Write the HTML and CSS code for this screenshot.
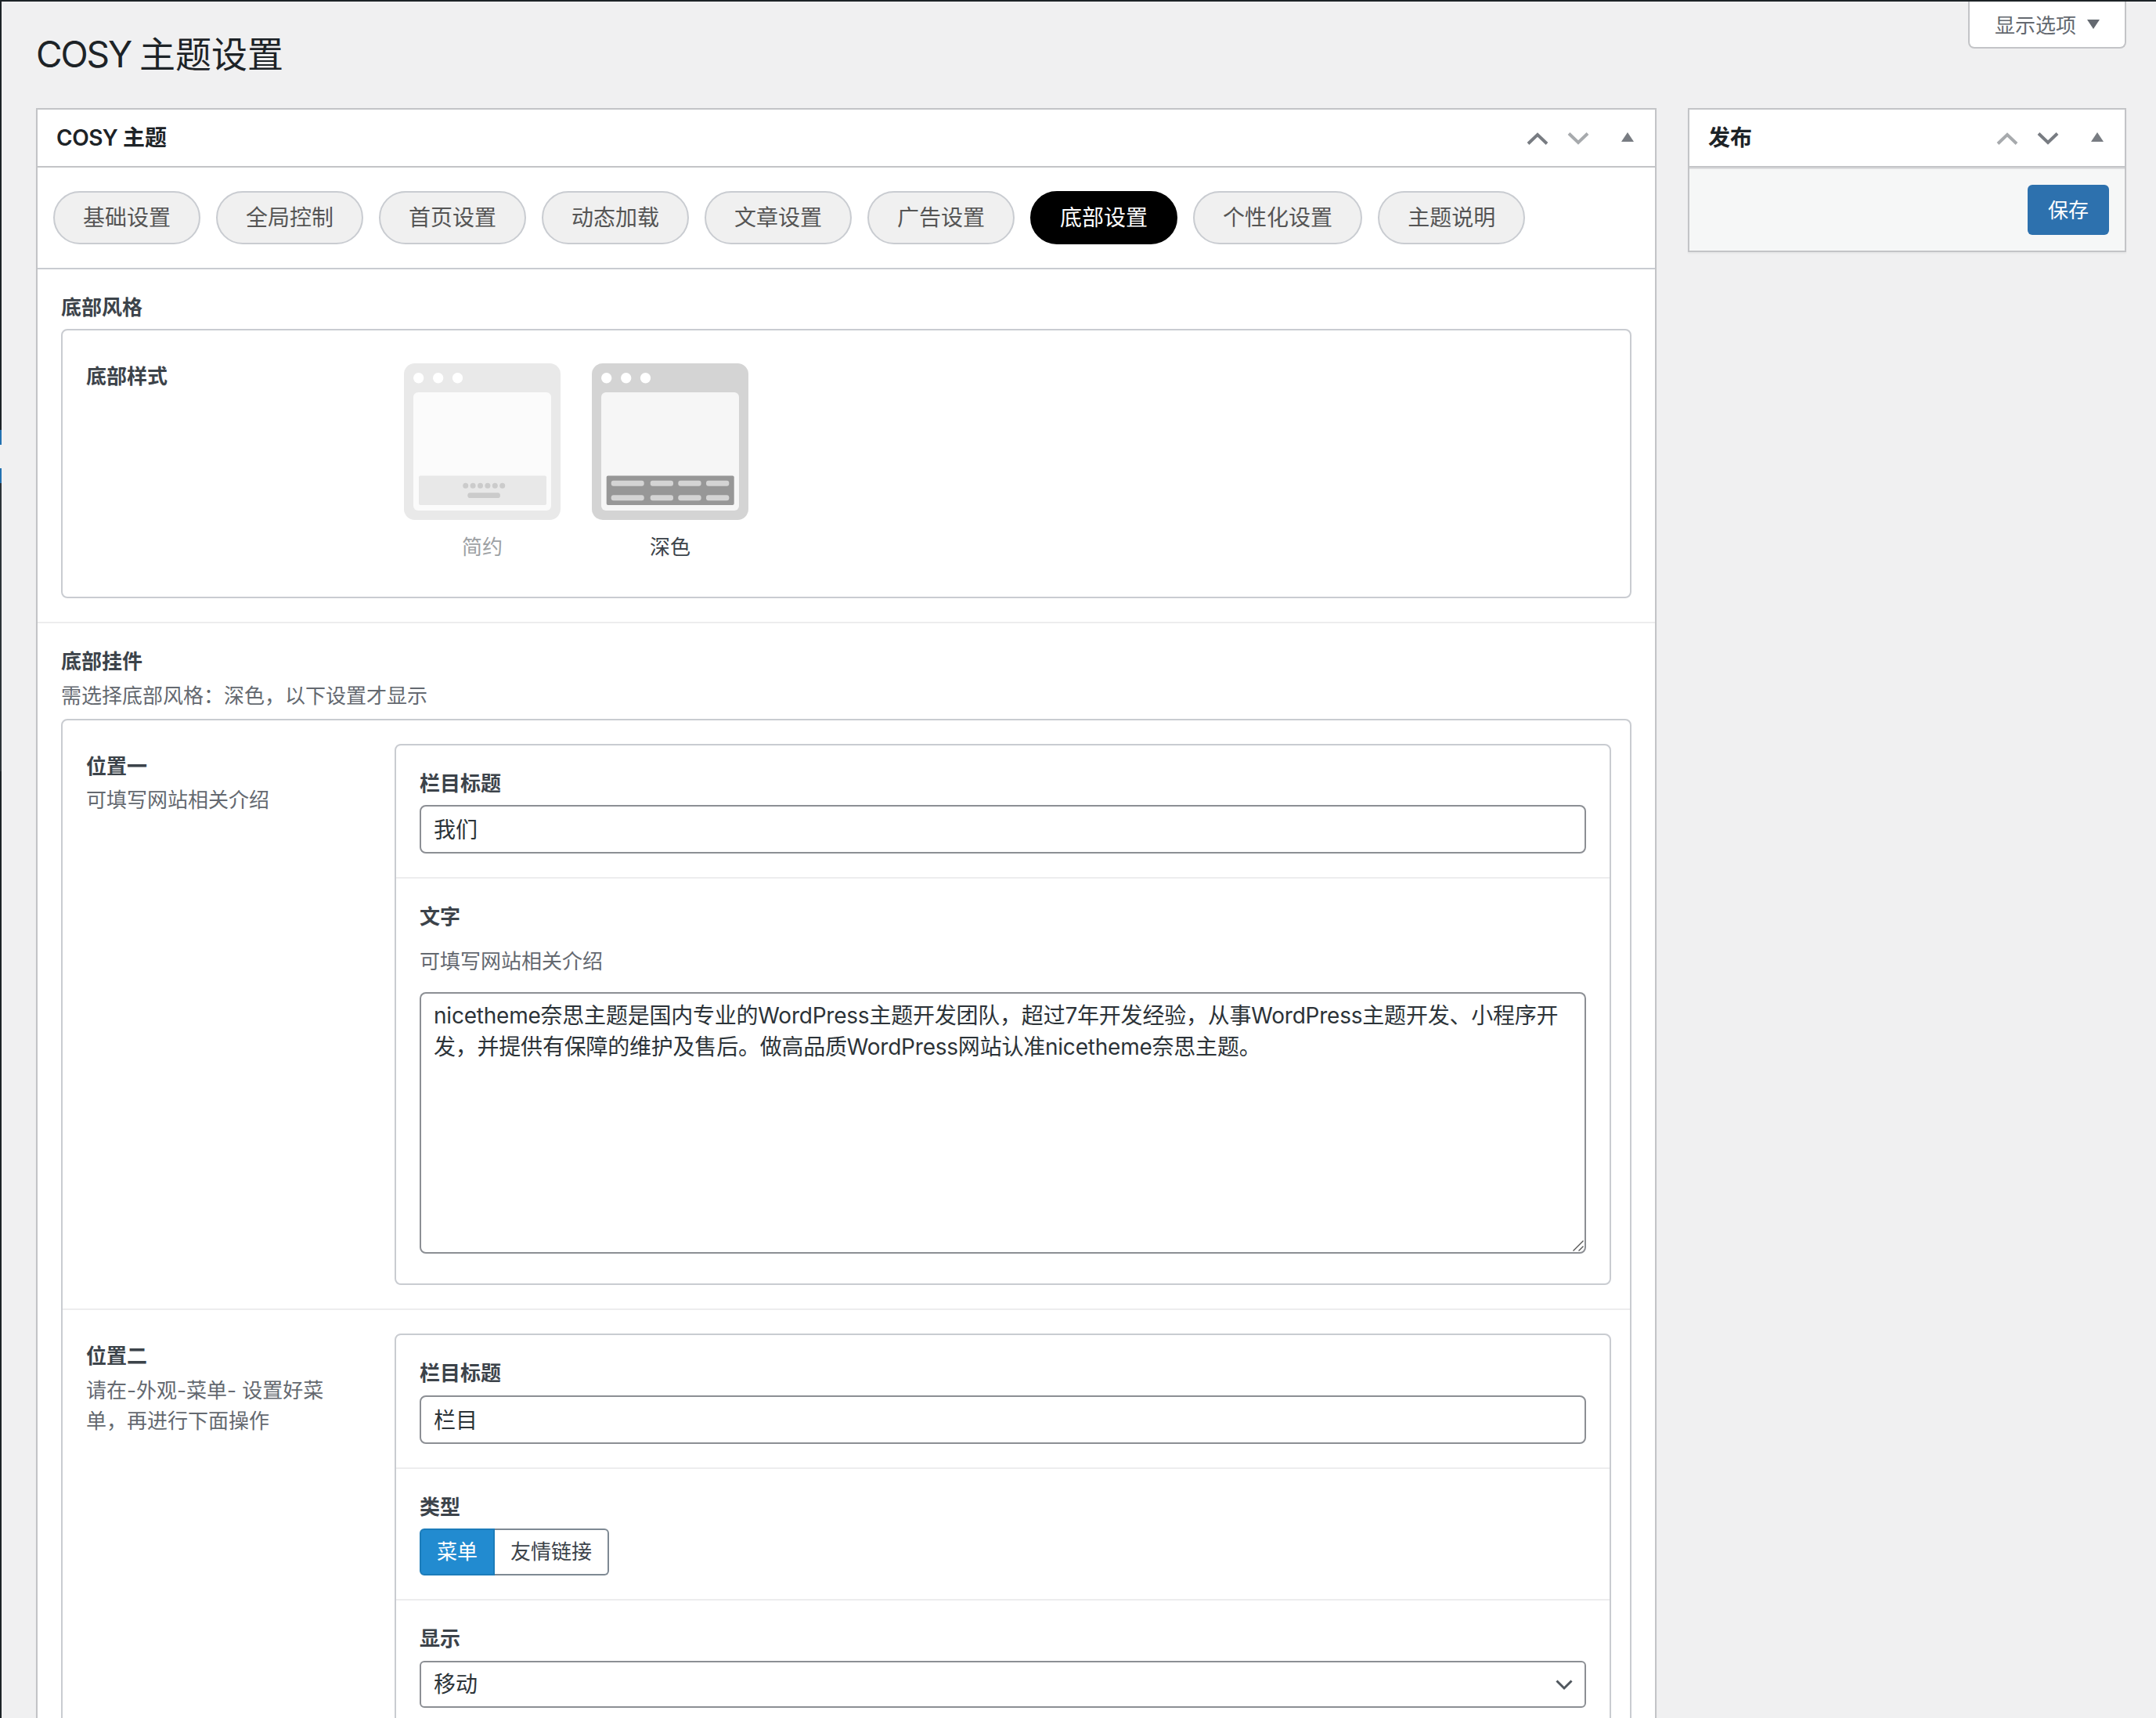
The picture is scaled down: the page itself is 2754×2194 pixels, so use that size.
FILE: index.html
```html
<!DOCTYPE html>
<html lang="zh-CN">
<head>
    <meta charset="UTF-8">
    <meta name="viewport" content="width=device-width, initial-scale=1.0">
    <title>COSY 主题设置</title>
    <link rel="stylesheet" href="styles.css">
</head>
<body>
    <div class="adminbar"></div>
    <div class="wrap">
        <div class="menu">
            <span class="menu-top"></span>
            <span class="menu-current"></span>
            <span class="menu-arrow"></span>
            <span class="menu-current"></span>
            <span class="submenu"></span>
        </div>
        <div class="content">
            <div class="head">
                <h1><span>COSY </span>主题设置</h1>
                <button class="screen-options">显示选项 <svg width="16" height="12" viewBox="0 0 16 12"><path d="M0 0h16L8 12z" fill="currentColor"/></svg></button>
            </div>
            <div class="columns">
                <div class="postbox main">
                    <div class="postbox-header">
                        <h2><span>COSY </span>主题</h2>
                        <div class="handles">
                            <svg width="28" height="18" viewBox="0 0 28 18"><path d="M2 15.500L14 4l12 11.500" fill="none" stroke="#787c82" stroke-width="4"/></svg>
                            <svg width="28" height="18" viewBox="0 0 28 18"><path d="M2 2.500L14 14l12-11.500" fill="none" stroke="#a7aaad" stroke-width="4"/></svg>
                            <svg class="toggle" width="16" height="12" viewBox="0 0 16 12"><path d="M0 12h16L8 0z" fill="#787c82"/></svg>
                        </div>
                    </div>
                    <div class="nav">
                        <a>基础设置</a>
                        <a>全局控制</a>
                        <a>首页设置</a>
                        <a>动态加载</a>
                        <a>文章设置</a>
                        <a>广告设置</a>
                        <a class="active">底部设置</a>
                        <a>个性化设置</a>
                        <a>主题说明</a>
                    </div>
                    <div class="section">
                        <h3>底部风格</h3>
                        <div class="group">
                            <div class="row style-row">
                                <div class="side"><h3>底部样式</h3></div>
                                <div class="thumbs">
                                    <div class="thumb">
                                        <svg width="200" height="200" viewBox="0 0 200 200">
                                            <rect width="200" height="200" rx="14" fill="#e9e9e9"/>
                                            <g fill="#fff"><circle cx="18.700" cy="18.700" r="6.700"/><circle cx="43.700" cy="18.700" r="6.700"/><circle cx="68.500" cy="18.700" r="6.700"/></g>
                                            <rect x="12" y="37" width="176" height="151" rx="6" fill="#fbfbfb"/>
                                            <rect x="19" y="143.500" width="163" height="37.500" rx="2" fill="#e8e8e8"/>
                                            <g fill="#cbcbcb">
                                                <circle cx="78.700" cy="156.300" r="3.500"/><circle cx="88.100" cy="156.300" r="3.500"/><circle cx="97.500" cy="156.300" r="3.500"/>
                                                <circle cx="106.900" cy="156.300" r="3.500"/><circle cx="116.300" cy="156.300" r="3.500"/><circle cx="125.700" cy="156.300" r="3.500"/>
                                                <rect x="81.300" y="165.300" width="41.700" height="6.800" rx="3.400"/>
                                            </g>
                                        </svg>
                                        <p>简约</p>
                                    </div>
                                    <div class="thumb selected">
                                        <svg width="200" height="200" viewBox="0 0 200 200">
                                            <rect width="200" height="200" rx="14" fill="#d4d4d4"/>
                                            <g fill="#fff"><circle cx="18.700" cy="18.700" r="6.700"/><circle cx="43.700" cy="18.700" r="6.700"/><circle cx="68.500" cy="18.700" r="6.700"/></g>
                                            <rect x="12" y="37" width="176" height="151" rx="6" fill="#f6f6f6"/>
                                            <rect x="18.700" y="143.500" width="163" height="37.500" rx="2" fill="#979797"/>
                                            <g fill="#d4d4d4">
                                                <rect x="24.700" y="149.700" width="42" height="7" rx="3"/><rect x="74.700" y="149.700" width="29.300" height="7" rx="3"/>
                                                <rect x="110.300" y="149.700" width="29.300" height="7" rx="3"/><rect x="146" y="149.700" width="29.300" height="7" rx="3"/>
                                                <rect x="24.700" y="168.300" width="42" height="7" rx="3"/><rect x="74.700" y="168.300" width="29.300" height="7" rx="3"/>
                                                <rect x="110.300" y="168.300" width="29.300" height="7" rx="3"/><rect x="146" y="168.300" width="29.300" height="7" rx="3"/>
                                            </g>
                                        </svg>
                                        <p>深色</p>
                                    </div>
                                </div>
                            </div>
                        </div>
                    </div>
                    <div class="section">
                        <h3>底部挂件</h3>
                        <p class="section-desc">需选择底部风格：深色，以下设置才显示</p>
                        <div class="group">
                            <div class="row">
                                <div class="side">
                                    <h3>位置一</h3>
                                    <p>可填写网站相关介绍</p>
                                </div>
                                <div class="fields">
                                    <div class="field">
                                        <h3>栏目标题</h3>
                                        <input type="text" value="我们">
                                    </div>
                                    <div class="field text-field">
                                        <h3>文字</h3>
                                        <p>可填写网站相关介绍</p>
                                        <div class="control">
                                            <textarea>nicetheme奈思主题是国内专业的WordPress主题开发团队，超过7年开发经验，从事WordPress主题开发、小程序开发，并提供有保障的维护及售后。做高品质WordPress网站认准nicetheme奈思主题。</textarea>
                                            <svg class="resizer" width="14" height="14" viewBox="0 0 14 14"><path d="M.5 13.500l13-13M7.500 13.500l6-6" stroke="#555" stroke-width="1.400"/></svg>
                                        </div>
                                    </div>
                                </div>
                            </div>
                            <div class="row">
                                <div class="side">
                                    <h3>位置二</h3>
                                    <p>请在-外观-菜单- 设置好菜单，再进行下面操作</p>
                                </div>
                                <div class="fields">
                                    <div class="field">
                                        <h3>栏目标题</h3>
                                        <input type="text" value="栏目">
                                    </div>
                                    <div class="field">
                                        <h3>类型</h3>
                                        <div class="button-set">
                                            <span class="on">菜单</span><span>友情链接</span>
                                        </div>
                                    </div>
                                    <div class="field">
                                        <h3>显示</h3>
                                        <div class="control">
                                            <select><option>移动</option></select>
                                            <svg class="arrow" width="22" height="14" viewBox="0 0 22 14"><path d="M1.500 1.500L11 11l9.500-9.500" fill="none" stroke="#50575e" stroke-width="3"/></svg>
                                        </div>
                                    </div>
                                </div>
                            </div>
                        </div>
                    </div>
                </div>
                <div class="postbox publish">
                    <div class="postbox-header">
                        <h2>发布</h2>
                        <div class="handles">
                            <svg width="28" height="18" viewBox="0 0 28 18"><path d="M2 15.500L14 4l12 11.500" fill="none" stroke="#a7aaad" stroke-width="4"/></svg>
                            <svg width="28" height="18" viewBox="0 0 28 18"><path d="M2 2.500L14 14l12-11.500" fill="none" stroke="#787c82" stroke-width="4"/></svg>
                            <svg class="toggle" width="16" height="12" viewBox="0 0 16 12"><path d="M0 12h16L8 0z" fill="#787c82"/></svg>
                        </div>
                    </div>
                    <div class="actions"><button class="save">保存</button></div>
                </div>
            </div>
        </div>
    </div>
</body>
</html>
```

FILE: styles.css
```css
*{
    margin: 0;
    padding: 0;
    box-sizing: border-box;
    font-family: Inter, "Noto Sans CJK SC", sans-serif;
}
body{
    height: 2194px;
    overflow: hidden;
    background: #f0f0f1;
    color: #3c434a;
    font-size: 26px;
}
svg{
    display: block;
}
.adminbar{
    height: 2px;
    background: #1d2327;
}
.wrap{
    display: flex;
    height: 2192px;
}

/* right edge of the collapsed admin menu */
.menu{
    display: flex;
    flex-direction: column;
    width: 2px;
    background: #1d2327;
}
.menu-top{
    height: 547px;
}
.menu-current{
    height: 19px;
    background: #2271b1;
}
.menu-arrow{
    height: 30px;
    background: #f0f0f1;
}
.submenu{
    height: 368px;
    background: #2c3338;
}

.content{
    flex: 1;
    padding: 0 38px 0 44px;
}
.head{
    display: flex;
    justify-content: space-between;
    align-items: flex-start;
    height: 136px;
}
h1{
    padding-top: 37px;
    font-size: 46px;
    font-weight: 400;
    line-height: 60px;
    color: #1d2327;
}
h1 span{
    letter-spacing: -2.1px;
}
.screen-options{
    display: flex;
    align-items: center;
    justify-content: space-between;
    width: 202px;
    height: 60px;
    padding: 0 32px 2px;
    border: 2px solid #c3c4c7;
    border-top: 0;
    border-radius: 0 0 8px 8px;
    background: #fff;
    color: #646970;
    font-size: 26px;
}
.screen-options svg{
    margin-top: 2px;
}
.columns{
    display: flex;
    align-items: flex-start;
    justify-content: space-between;
}
.postbox{
    border: 2px solid #c3c4c7;
    background: #fff;
    box-shadow: 0 2px 2px rgba(0,0,0,.04);
}
.main{
    width: 2070px;
}
.publish{
    width: 560px;
}
.postbox-header{
    display: flex;
    align-items: center;
    justify-content: space-between;
    height: 74px;
    padding: 0 27px 0 24px;
    border-bottom: 2px solid #c3c4c7;
}
h2{
    font-size: 28px;
    font-weight: 600;
    line-height: 40px;
    color: #1d2327;
}
h2 span{
    letter-spacing: -.5px;
}
.handles{
    display: flex;
    align-items: center;
    gap: 24px;
    padding-top: 2px;
}
.handles .toggle{
    margin: 0 0 4px 17px;
}
.actions{
    display: flex;
    justify-content: flex-end;
    height: 106px;
    padding: 20px;
    border-top: 2px solid #dcdcde;
    background: #f6f7f7;
}
.save{
    width: 104px;
    height: 64px;
    padding-bottom: 3px;
    border: 0;
    border-radius: 6px;
    background: #2d71ae;
    color: #fff;
    font-size: 26px;
}
.nav{
    display: flex;
    gap: 20px;
    height: 130px;
    padding: 30px 20px;
    border-bottom: 2px solid #c9ccd1;
}
.nav a{
    height: 68px;
    padding: 0 36px;
    border: 2px solid #c9ccd1;
    border-radius: 34px;
    background: #f0f0f0;
    color: #555;
    font-size: 28px;
    line-height: 64px;
}
.nav .active{
    border-color: #000;
    background: #000;
    color: #fff;
}
.section{
    padding: 31px 30px 30px;
    border-bottom: 2px solid #ededee;
}
h3{
    margin-bottom: 9px;
    font-size: 26px;
    font-weight: 600;
    line-height: 36.4px;
}
.section-desc{
    margin: -2px 0 11.2px;
    line-height: 36px;
    color: #646970;
}
.group{
    border: 2px solid #c9ccd1;
    border-radius: 8px;
}
.row{
    display: flex;
    justify-content: space-between;
    padding: 30px 24px 30px 30px;
    border-bottom: 2px solid #ededee;
}
.row:last-child{
    border-bottom: 0;
}
.side{
    flex-shrink: 0;
    width: 320px;
    padding-top: 11px;
}
.side h3{
    margin-bottom: 5px;
}
.side p{
    line-height: 39.500px;
    color: #646970;
}
.style-row{
    justify-content: flex-start;
    height: 340px;
}
.style-row .side{
    width: 406px;
}
.thumbs{
    display: flex;
    gap: 40px;
    padding-top: 12px;
}
.thumb{
    text-align: center;
    color: #9da1a4;
}
.thumb p{
    margin-top: 17px;
    line-height: 36px;
}
.thumb.selected{
    color: #3c434a;
}
.fields{
    width: 1554px;
    border: 2px solid #c9ccd1;
    border-radius: 8px;
}
.field{
    padding: 31px 30px 30px;
    border-bottom: 2px solid #ededee;
}
.field:last-child{
    border-bottom: 0;
}
.text-field{
    padding-bottom: 38.500px;
}
.text-field p{
    margin: 20px 0 21px;
    line-height: 36px;
    color: #646970;
}
input, textarea, select{
    display: block;
    width: 100%;
    padding: 0 16px;
    border: 2px solid #8c8f94;
    border-radius: 8px;
    outline: 0;
    background: #fff;
    color: #2c3338;
    font-size: 28px;
    appearance: none;
}
input{
    height: 62px;
    padding-bottom: 2px;
}
select{
    height: 60px;
    border-radius: 6px;
}
textarea{
    height: 334px;
    padding-top: 8px;
    line-height: 40px;
    letter-spacing: -.22px;
    resize: none;
    overflow: hidden;
}
.control{
    position: relative;
}
.resizer{
    position: absolute;
    right: 3px;
    bottom: 3px;
}
.arrow{
    position: absolute;
    right: 17px;
    top: 24px;
}
.button-set{
    display: flex;
}
.button-set span{
    height: 60px;
    padding: 0 20px;
    border: 2px solid #7e8993;
    border-left: 0;
    border-radius: 0 6px 6px 0;
    line-height: 56px;
}
.button-set .on{
    border: 2px solid #1c7cba;
    border-radius: 6px 0 0 6px;
    background: #228bd0;
    color: #fff;
}
```
